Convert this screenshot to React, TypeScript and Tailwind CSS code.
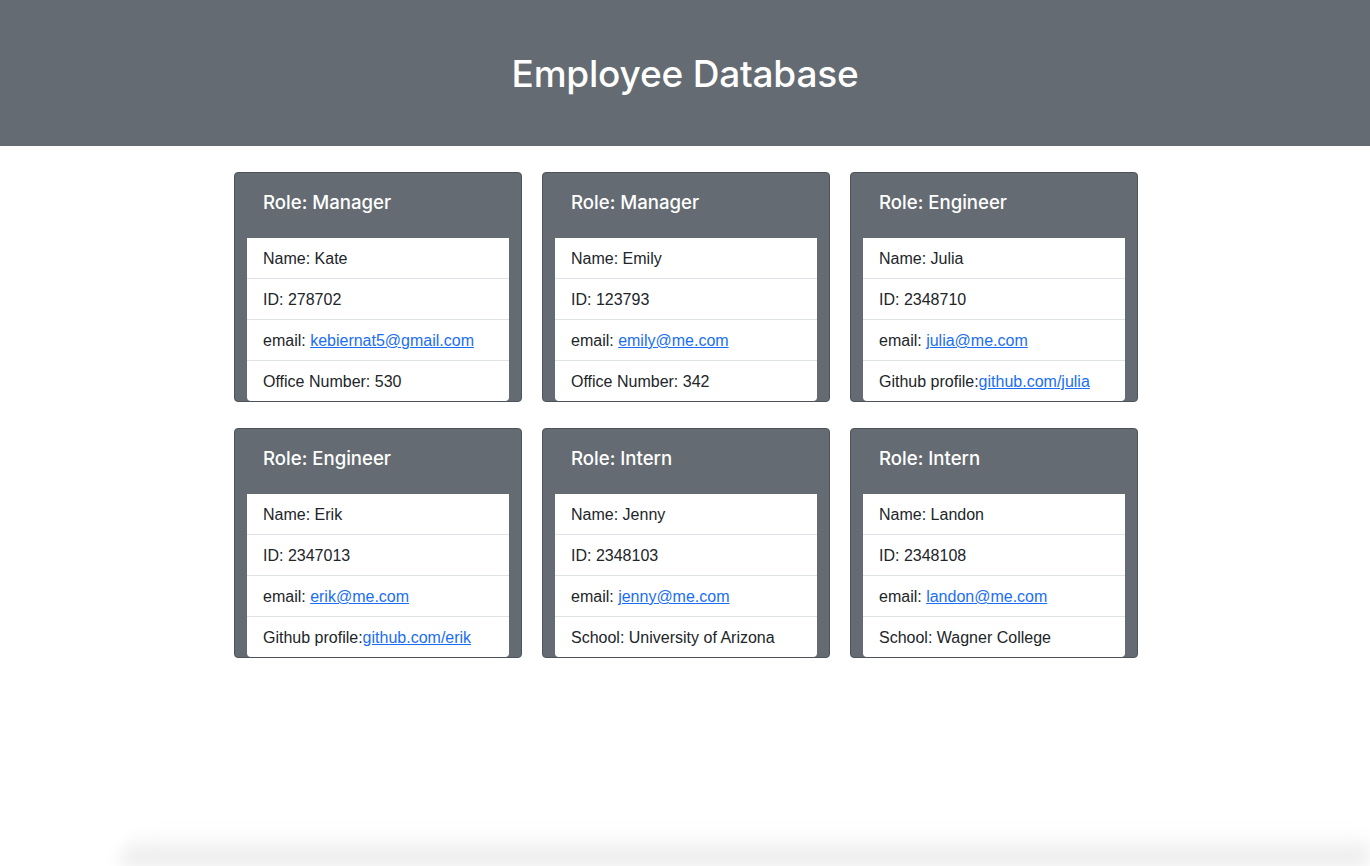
type Employee = {
  role: string;
  name: string;
  id: string;
  email: string;
  extraLabel: string;
  extraValue: string;
  extraLink?: boolean;
};

const employees: Employee[] = [
  { role: "Manager", name: "Kate", id: "278702", email: "kebiernat5@gmail.com", extraLabel: "Office Number: ", extraValue: "530" },
  { role: "Manager", name: "Emily", id: "123793", email: "emily@me.com", extraLabel: "Office Number: ", extraValue: "342" },
  { role: "Engineer", name: "Julia", id: "2348710", email: "julia@me.com", extraLabel: "Github profile:", extraValue: "github.com/julia", extraLink: true },
  { role: "Engineer", name: "Erik", id: "2347013", email: "erik@me.com", extraLabel: "Github profile:", extraValue: "github.com/erik", extraLink: true },
  { role: "Intern", name: "Jenny", id: "2348103", email: "jenny@me.com", extraLabel: "School: ", extraValue: "University of Arizona" },
  { role: "Intern", name: "Landon", id: "2348108", email: "landon@me.com", extraLabel: "School: ", extraValue: "Wagner College" },
];

function Card({ emp }: { emp: Employee }) {
  return (
    <div className="flex flex-col rounded border border-[#4d5359] bg-[#646b72]">
      <h5 className="px-7 pt-[17px] pb-6 font-['Inter',sans-serif] text-[18.6px] leading-6 font-medium text-white">
        Role: {emp.role}
      </h5>
      <ul className="mx-3 rounded-b bg-white text-[16px] leading-6 text-[#212529]">
        <li className="border-b border-[#dee2e6] px-4 pt-[9px] pb-[7px]">Name: {emp.name}</li>
        <li className="border-b border-[#dee2e6] px-4 pt-[9px] pb-[7px]">ID: {emp.id}</li>
        <li className="border-b border-[#dee2e6] px-4 pt-[9px] pb-[7px]">
          email: <a href="#" className="text-[#1a6ef5] underline">{emp.email}</a>
        </li>
        <li className="px-4 pt-[9px] pb-[7px]">
          {emp.extraLabel}
          {emp.extraLink ? (
            <a href="#" className="text-[#1a6ef5] underline">{emp.extraValue}</a>
          ) : (
            emp.extraValue
          )}
        </li>
      </ul>
    </div>
  );
}

export default function App() {
  return (
    <div className="min-h-screen bg-white font-['Liberation_Sans',Arial,sans-serif]">
      <header className="flex h-[146px] items-center justify-center bg-[#646b72]">
        <h1 className="font-['Inter',sans-serif] text-[37px] leading-none font-medium tracking-[-0.2px] text-white">
          Employee Database
        </h1>
      </header>
      <main className="mx-auto mt-[26px] grid w-[904px] translate-x-px grid-cols-3 gap-x-5 gap-y-[26px]">
        {employees.map((e) => (
          <Card key={e.name} emp={e} />
        ))}
      </main>
      <div className="pointer-events-none fixed right-0 bottom-0 left-[120px] h-[34px] rounded-tl-[40px] bg-gradient-to-b from-white/0 to-[#e6e6e6] blur-[8px]" />
    </div>
  );
}
